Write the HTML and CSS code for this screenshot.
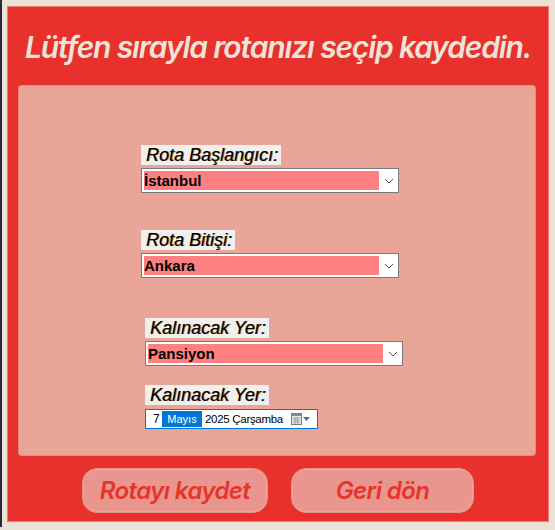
FILE: index.html
```html
<!DOCTYPE html>
<html lang="tr">
<head>
<meta charset="utf-8">
<link rel="stylesheet" href="styles.css">
</head>
<body>
<div class="window">
  <div class="panel">
    <h1 class="title">Lütfen sırayla rotanızı seçip kaydedin.</h1>
    <div class="card">
      <div class="group g1">
        <span class="label">Rota Başlangıcı:</span>
        <div class="combo"><span class="field">İstanbul</span><span class="chev"><svg width="10" height="6" viewBox="0 0 10 6"><path d="M1 1l4 4 4-4" fill="none" stroke="#555" stroke-width="1"/></svg></span></div>
      </div>
      <div class="group g2">
        <span class="label">Rota Bitişi:</span>
        <div class="combo"><span class="field">Ankara</span><span class="chev"><svg width="10" height="6" viewBox="0 0 10 6"><path d="M1 1l4 4 4-4" fill="none" stroke="#555" stroke-width="1"/></svg></span></div>
      </div>
      <div class="group g3">
        <span class="label">Kalınacak Yer:</span>
        <div class="combo"><span class="field">Pansiyon</span><span class="chev"><svg width="10" height="6" viewBox="0 0 10 6"><path d="M1 1l4 4 4-4" fill="none" stroke="#555" stroke-width="1"/></svg></span></div>
      </div>
      <div class="group g4">
        <span class="label">Kalınacak Yer:</span>
        <div class="date">
          <span class="d-day">7</span><span class="d-month">Mayıs</span><span class="d-rest">2025 Çarşamba</span>
          <span class="d-icon"><svg width="20" height="12" viewBox="0 0 20 12"><rect x="0.5" y="0.5" width="10" height="11" fill="#e8e8e8" stroke="#7a7a7a"/><rect x="1" y="1" width="9" height="2" fill="#8a8a8a"/><path d="M2 5h7M2 7h7M2 9h7M4 4v7M6.5 4v7" stroke="#9a9a9a" stroke-width="0.8"/><path d="M12 4h7l-3.5 4z" fill="#4a6fa0"/></svg></span>
        </div>
      </div>
    </div>
    <div class="actions">
      <button class="btn btn-save">Rotayı kaydet</button>
      <button class="btn btn-back">Geri dön</button>
    </div>
  </div>
</div>
</body>
</html>
```
FILE: styles.css
```css
html, body {
  margin: 0;
  padding: 0;
}
body {
  background: #ebe3d6;
  width: 555px;
  height: 530px;
  overflow: hidden;
}
.window {
  box-sizing: border-box;
  width: 555px;
  height: 527px;
  border-left: 2px solid #262a33;
  padding: 7px 7px 6px 6px;
}
.panel {
  box-sizing: border-box;
  width: 540px;
  height: 514px;
  background: #e8302c;
  box-shadow: 0 0 0 1px #f07a70;
  padding: 0 13px 0 11px;
  display: flex;
  flex-direction: column;
}
.title {
  margin: 0;
  height: 79px;
  box-sizing: border-box;
  padding: 22px 0 0 6px;
  font-family: "Inter", "DejaVu Sans", sans-serif;
  font-style: italic;
  font-weight: 600;
  font-size: 30px;
  line-height: 36px;
  letter-spacing: -1.15px;
  color: #ede4d7;
  white-space: nowrap;
}
.card {
  height: 369px;
  background: #e8a598;
  border-radius: 3px;
  box-shadow: 0 0 0 1px #ec8a80;
  box-sizing: border-box;
  padding-top: 59px;
  display: flex;
  flex-direction: column;
}
.group {
  display: flex;
  flex-direction: column;
  align-items: flex-start;
  padding-left: 122px;
}
.g2 { margin-top: 37px; }
.g3 { margin-top: 40px; padding-left: 126px; }
.g4 { margin-top: 19px; padding-left: 126px; }
.label {
  background: #f0f0f0;
  font-family: "Liberation Sans", Arial, sans-serif;
  font-style: italic;
  font-size: 18px;
  line-height: 20px;
  padding: 0 3px 0 5px;
  color: #000;
  text-shadow: 1px 0 0 #b07a30;
}
.combo {
  margin-top: 3px;
  box-sizing: border-box;
  width: 258px;
  height: 25px;
  border: 1px solid #7a7a7a;
  background: #fff;
  display: flex;
  align-items: stretch;
  padding: 2px 0 2px 2px;
}
.field {
  width: 235px;
  background: #ff8080;
  font-family: "Liberation Sans", Arial, sans-serif;
  font-weight: bold;
  font-size: 15px;
  line-height: 19px;
  color: #000;
  padding-left: 0;
}
.chev {
  flex: 1;
  display: flex;
  align-items: center;
  justify-content: center;
  padding-top: 1px;
}
.date {
  margin-top: 4px;
  box-sizing: border-box;
  width: 173px;
  height: 20px;
  border: 1px solid #0078d7;
  background: #fff;
  display: flex;
  align-items: center;
  font-family: "Liberation Sans", Arial, sans-serif;
  font-size: 11px;
  color: #000;
}
.d-day { padding-left: 7px; width: 9px; font-size: 12px; }
.d-month {
  background: #0078d7;
  color: #fff;
  width: 40px;
  height: 16px;
  line-height: 16px;
  text-align: center;
}
.d-rest { padding-left: 3px; font-size: 11.5px; letter-spacing: -0.3px; }
.d-icon {
  margin-left: auto;
  margin-right: 6px;
  display: flex;
}
.actions {
  display: flex;
  gap: 23px;
  padding: 13px 0 0 63px;
}
.btn {
  box-sizing: border-box;
  height: 45px;
  border-radius: 15px;
  background: #e9968e;
  border: 1px solid #ec8f87;
  box-shadow: inset 0 0 0 1px #eda49c;
  color: #e8332d;
  font-family: "Inter", "DejaVu Sans", sans-serif;
  font-style: italic;
  font-weight: 600;
  font-size: 24px;
  letter-spacing: -0.6px;
  padding: 0;
}
.btn-save { width: 186px; }
.btn-back { width: 183px; }
```
